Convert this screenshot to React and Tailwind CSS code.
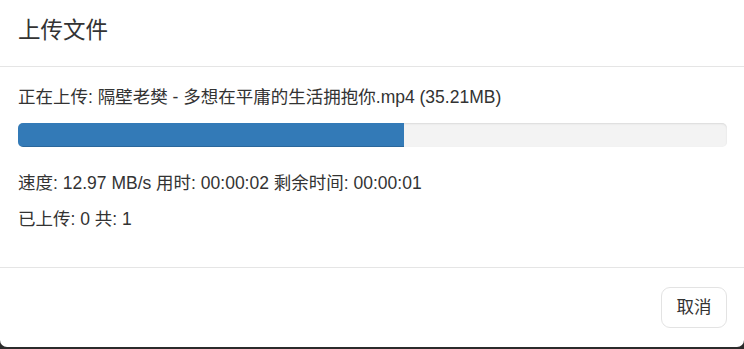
export default function App() {
  const percent = 54.4;

  return (
    <div
      className="h-[349px] w-[744px] bg-[#2b2b2b] text-[#333]"
      style={{ fontFamily: '"Liberation Sans", "Noto Sans CJK SC", sans-serif' }}
    >
      <div className="flex h-[347px] flex-col rounded-b-[7px] bg-white">
        {/* header */}
        <div className="flex h-[67px] items-center border-b border-[#e5e5e5] pb-[4px] pl-[18px] pr-[17px]">
          <h4 className="text-[22.5px] leading-[26px]">上传文件</h4>
        </div>

        {/* body */}
        <div className="h-[201px] border-b border-[#e5e5e5] pl-[18px] pr-[17px] pt-[18px]">
          <p className="mb-[14px] text-[17.5px] leading-[24px]">
            正在上传: 隔壁老樊 - 多想在平庸的生活拥抱你.mp4 (35.21MB)
          </p>
          <div className="mb-[24px] h-[24px] overflow-hidden rounded-[5px] bg-[#f3f3f3] shadow-[inset_0_1px_2px_rgba(0,0,0,0.1)]">
            <div
              className="h-full bg-[#337ab7] shadow-[inset_0_-1px_0_rgba(0,0,0,0.15)]"
              style={{ width: `${percent}%` }}
            />
          </div>
          <p className="mb-[12px] text-[17.5px] leading-[24px]">
            速度: 12.97 MB/s 用时: 00:00:02 剩余时间: 00:00:01
          </p>
          <p className="text-[17.5px] leading-[24px]">已上传: 0 共: 1</p>
        </div>

        {/* footer */}
        <div className="flex flex-1 items-center justify-end px-[17px]">
          <button className="h-[41px] w-[66px] rounded-[9px] border border-[#e3e3e3] bg-white text-[17.5px] text-[#333]">
            取消
          </button>
        </div>
      </div>
    </div>
  );
}
